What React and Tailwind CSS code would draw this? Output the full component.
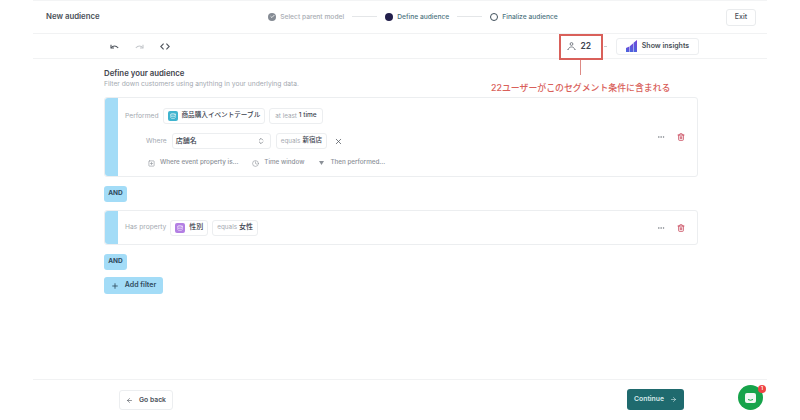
import React from "react";
import { ChevronsUpDown, X, Plus, ArrowLeft, ArrowRight, Clock, SquarePlus, Ellipsis, Trash2, Check, Database } from "lucide-react";

function Chip({ children, className = "" }) {
  return (
    <div className={"flex h-[16px] items-center rounded-[3px] border border-[#eceef0] bg-white text-[6.5px] font-medium text-[#3c4450] " + className}>
      {children}
    </div>
  );
}

function Gray({ children }) {
  return <span className="text-[6.3px] font-normal text-[#a4a9b0]">{children}</span>;
}

function CardActions() {
  return (
    <div className="flex items-center gap-[12px] pr-[12px]">
      <Ellipsis className="h-[8px] w-[8px] text-[#777c84]" />
      <Trash2 className="h-[8px] w-[8px] text-[#c9485b]" strokeWidth={2.5} />
    </div>
  );
}

function AndTag() {
  return (
    <div className="flex h-[16px] w-[23px] items-center justify-center rounded-[3px] bg-[#a3dcf7] text-[6.5px] font-bold text-[#2f4a5c]">
      AND
    </div>
  );
}

function HookArrow({ className = "" }) {
  return (
    <svg className={className} width="9" height="5" viewBox="0 0 9 5" fill="none" stroke="currentColor" strokeWidth="1.1">
      <path d="M1 .8V4h3" />
      <path d="M1 4c2-2.6 5-2.6 7.2 0" />
    </svg>
  );
}

export default function App() {
  return (
    <div className="relative flex h-[420px] w-[800px] justify-center overflow-hidden bg-white font-['Inter','Noto_Sans_CJK_JP',sans-serif]">
      <div className="flex h-full w-[734px] flex-col border-t border-[#f3f4f5]">
        {/* Header */}
        <header className="flex h-[33px] shrink-0 items-center justify-between border-b border-[#f1f2f3] pl-[13px] pr-[11px]">
          <div className="w-[184px] text-[7.8px] font-semibold text-[#4a5058]">New audience</div>
          <div className="flex items-center gap-[8px] text-[6.7px] font-medium">
            <div className="flex items-center gap-[4px] text-[#a9adb3]">
              <span className="flex h-[8px] w-[8px] items-center justify-center rounded-full bg-[#858b94]">
                <Check className="h-[5px] w-[5px] text-white" strokeWidth={4} />
              </span>
              Select parent model
            </div>
            <div className="h-px w-[25px] bg-[#e4e6e8]" />
            <div className="flex items-center gap-[4px] text-[#4d7480]">
              <span className="h-[8px] w-[8px] rounded-full bg-[#221f4b]" />
              Define audience
            </div>
            <div className="h-px w-[25px] bg-[#e4e6e8]" />
            <div className="flex items-center gap-[4px] text-[#4d7480]">
              <span className="h-[8px] w-[8px] rounded-full border border-[#40505c]" />
              Finalize audience
            </div>
          </div>
          <div className="flex w-[160px] justify-end">
            <div className="flex h-[17px] w-[30px] items-center justify-center rounded-[3px] border border-[#e9ebed] text-[7px] font-medium text-[#4a5058]">
              Exit
            </div>
          </div>
        </header>

        {/* Toolbar */}
        <div className="flex h-[25px] shrink-0 items-center justify-between border-b border-[#f1f2f3] pl-[77px] pr-[68px]">
          <div className="flex items-center gap-[16px] text-[#50565e]">
            <HookArrow />
            <HookArrow className="-scale-x-100 text-[#c5c8cc]" />
            <svg width="10" height="7" viewBox="0 0 10 7" fill="none" stroke="currentColor" strokeWidth="1.1">
              <path d="M3.6.6.8 3.5l2.8 2.9" />
              <path d="M6.4.6l2.8 2.9-2.8 2.9" />
            </svg>
          </div>
          <div className="flex items-center">
            <div className="flex items-center gap-[4px] text-[8.5px] font-semibold text-[#3c4450]">
              <svg width="9" height="8" viewBox="0 0 9 8" fill="none" stroke="#6c7179" strokeWidth="0.9">
                <circle cx="4.5" cy="2" r="1.4" />
                <path d="M1.5 7.5c0-3.4 6-3.4 6 0" />
                <path d="M.4 7.5h1M7.6 7.5h1" />
              </svg>
              22
            </div>
            <div className="ml-[13px] h-px w-[3px] bg-[#c9cccf]" />
            <div className="ml-[9px] flex h-[17px] w-[83px] items-center justify-center gap-[5px] rounded-[3px] border border-[#eceef0] text-[7px] font-semibold text-[#4a5058]">
              <svg width="11" height="12" viewBox="0 0 11 12">
                <defs>
                  <linearGradient id="insight" x1="0" y1="1" x2="1" y2="0">
                    <stop offset="0" stopColor="#3f6fe0" />
                    <stop offset="1" stopColor="#7a3fd6" />
                  </linearGradient>
                </defs>
                <path d="M0 8 3.4 6.5V12H0z" fill="url(#insight)" />
                <path d="M3.8 6.2 7.2 3.2V12H3.8z" fill="url(#insight)" />
                <path d="M7.6 2.8 11 0v12H7.6z" fill="url(#insight)" />
              </svg>
              Show insights
            </div>
          </div>
        </div>

        {/* Main */}
        <main className="flex flex-1 flex-col pl-[71px] pr-[69px] pt-[8px]">
          <h1 className="text-[7.8px] font-semibold leading-[12px] text-[#3f454d]">Define your audience</h1>
          <p className="text-[6.7px] leading-[10px] text-[#a4a9b0]">
            Filter down customers using anything in your underlying data.
          </p>

          {/* Card 1 */}
          <div className="mt-[8px] flex h-[80px] items-center rounded-[3px] border border-[#eceef0]">
            <div className="h-full w-[13px] shrink-0 rounded-l-[3px] bg-[#a3dcf7]" />
            <div className="flex flex-1 flex-col pl-[7px] pt-[2px]">
              <div className="flex items-center gap-[4px]">
                <span className="text-[6.7px] text-[#a4a9b0]">Performed</span>
                <Chip className="gap-[4px] pl-[4px] pr-[4px]">
                  <span className="flex h-[10px] w-[10px] items-center justify-center rounded-[2px] bg-[#3fb4cf]">
                    <Database className="h-[6px] w-[6px] text-white" />
                  </span>
                  <span className="text-[6.6px]">商品購入イベントテーブル</span>
                </Chip>
                <Chip className="gap-[2px] px-[5px]">
                  <Gray>at least</Gray> 1 time
                </Chip>
              </div>
              <div className="mt-[9px] flex items-center gap-[4px] pl-[21px]">
                <span className="mr-px text-[6.7px] text-[#a4a9b0]">Where</span>
                <Chip className="w-[99px] justify-between pl-[3px] pr-[5px] text-[7px]">
                  店舗名
                  <ChevronsUpDown className="h-[8px] w-[8px] text-[#60666e]" />
                </Chip>
                <Chip className="ml-px gap-[2px] px-[4px]">
                  <Gray>equals</Gray> 新宿店
                </Chip>
                <X className="ml-[3px] h-[9px] w-[9px] text-[#50565e]" />
              </div>
              <div className="mt-[9px] flex items-center gap-[14px] pl-[23px] text-[6.3px] font-medium text-[#8c9198]">
                <span className="flex items-center gap-[5px]">
                  <SquarePlus className="h-[7px] w-[7px]" />
                  Where event property is...
                </span>
                <span className="flex items-center gap-[5px]">
                  <Clock className="h-[7px] w-[7px]" />
                  Time window
                </span>
                <span className="ml-px flex items-center gap-[6px]">
                  <svg width="5" height="4" viewBox="0 0 5 4"><path d="M0 0h5L2.5 4z" fill="#8c9198" /></svg>
                  Then performed...
                </span>
              </div>
            </div>
            <CardActions />
          </div>

          <div className="mt-[9px]"><AndTag /></div>

          {/* Card 2 */}
          <div className="mt-[8px] flex h-[35px] items-center rounded-[3px] border border-[#eceef0]">
            <div className="h-full w-[13px] shrink-0 rounded-l-[3px] bg-[#a3dcf7]" />
            <div className="flex flex-1 items-center gap-[4px] pl-[7px]">
              <span className="text-[6.7px] text-[#a4a9b0]">Has property</span>
              <Chip className="gap-[4px] px-[4px] text-[7px]">
                <span className="flex h-[10px] w-[10px] items-center justify-center rounded-[2px] bg-[#b37fe3]">
                  <Database className="h-[6px] w-[6px] text-white" />
                </span>
                性別
              </Chip>
              <Chip className="gap-[2px] px-[4px] text-[7px]">
                <Gray>equals</Gray> 女性
              </Chip>
            </div>
            <CardActions />
          </div>

          <div className="mt-[9px]"><AndTag /></div>

          <div className="mt-[7px] flex h-[17px] w-[59px] items-center justify-center gap-[6px] rounded-[3px] bg-[#a3dcf7] text-[7px] font-semibold text-[#2f4a5c]">
            <Plus className="h-[8px] w-[8px]" strokeWidth={2.5} />
            Add filter
          </div>
        </main>

        {/* Footer */}
        <footer className="flex h-[41px] shrink-0 items-start justify-between border-t border-[#f1f2f3] pl-[86px] pr-[83px] pt-[10px]">
          <div className="flex h-[20px] w-[54px] items-center justify-center gap-[6px] rounded-[3px] border border-[#eceef0] text-[6.8px] font-semibold text-[#4a5058]">
            <ArrowLeft className="h-[7px] w-[7px]" />
            Go back
          </div>
          <div className="-mt-px flex h-[21px] w-[57px] items-center justify-center gap-[6px] rounded-[3px] bg-[#1f6a6e] text-[6.8px] font-semibold text-[#d9ecec]">
            Continue
            <ArrowRight className="h-[7px] w-[7px]" />
          </div>
        </footer>
      </div>

      {/* Annotation */}
      <div className="absolute left-[559px] top-[34px] h-[26px] w-[44px] border-[2px] border-[#d9605a]" />
      <div className="absolute left-[580px] top-[60px] h-[15px] w-px bg-[#dd8a85]" />
      <div className="absolute left-[491px] top-[81px] text-[8.9px] font-medium leading-[13px] text-[#d9605a]">
        22ユーザーがこのセグメント条件に含まれる
      </div>

      {/* Chat launcher */}
      <div className="absolute left-[738px] top-[385px] flex h-[25px] w-[25px] items-center justify-center rounded-full bg-[#16a34a]">
        <svg width="11" height="10" viewBox="0 0 11 10">
          <rect width="11" height="10" rx="2" fill="#f1f7f3" />
          <path d="M3 6.5q2.5 1.5 5 0" stroke="#16a34a" strokeWidth="1" fill="none" />
        </svg>
        <span className="absolute -right-[3px] top-0 flex h-[8px] w-[8px] items-center justify-center rounded-full bg-[#ef4444] text-[5px] font-semibold text-white">1</span>
      </div>
    </div>
  );
}
